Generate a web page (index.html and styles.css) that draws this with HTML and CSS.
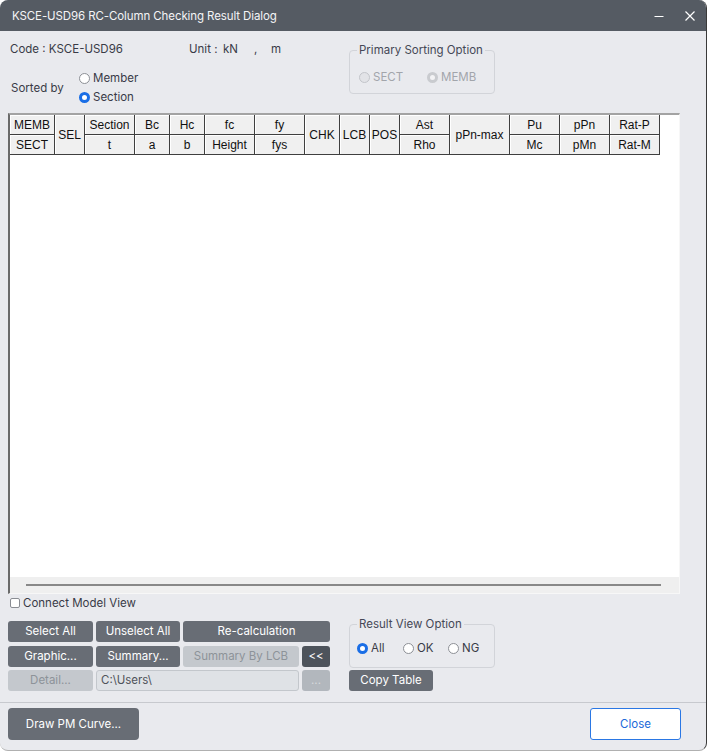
FILE: index.html
```html
<!DOCTYPE html>
<html>
<head>
<meta charset="utf-8">
<link rel="stylesheet" href="styles.css">
</head>
<body>
<div class="window">
  <div class="titlebar">
    <span class="title">KSCE-USD96 RC-Column Checking Result Dialog</span>
    <div class="controls">
      <svg class="ctl" width="10" height="10" viewBox="0 0 10 10"><line x1="0.5" y1="5.5" x2="9.5" y2="5.5" stroke="#fff" stroke-width="1.2"/></svg>
      <svg class="ctl" width="10" height="10" viewBox="0 0 10 10"><path d="M0.5 0.5 L9.5 9.5 M9.5 0.5 L0.5 9.5" stroke="#fff" stroke-width="1.2" fill="none"/></svg>
    </div>
  </div>

  <div class="top">
    <div class="top-left">
      <div class="code-row">
        <span class="c-code">Code : KSCE-USD96</span>
        <span class="c-unit">Unit :</span>
        <span class="c-kn">kN</span>
        <span class="c-comma">,</span>
        <span>m</span>
      </div>
      <div class="sort-row">
        <span class="sort-label">Sorted by</span>
        <div class="radio-col">
          <div class="radio"><span class="dot"></span>Member</div>
          <div class="radio"><span class="dot on"></span>Section</div>
        </div>
      </div>
    </div>
    <fieldset class="group group-primary">
      <legend>Primary Sorting Option</legend>
      <div class="radio-row">
        <div class="radio disabled w-sect"><span class="dot dis"></span>SECT</div>
        <div class="radio disabled"><span class="dot dis-on"></span>MEMB</div>
      </div>
    </fieldset>
  </div>

  <div class="grid-wrap">
    <div class="hdr">
      <div class="hc">MEMB</div>
      <div class="hc span2">SEL</div>
      <div class="hc">Section</div>
      <div class="hc">Bc</div>
      <div class="hc">Hc</div>
      <div class="hc">fc</div>
      <div class="hc">fy</div>
      <div class="hc span2">CHK</div>
      <div class="hc span2">LCB</div>
      <div class="hc span2">POS</div>
      <div class="hc">Ast</div>
      <div class="hc span2">pPn-max</div>
      <div class="hc">Pu</div>
      <div class="hc">pPn</div>
      <div class="hc">Rat-P</div>
      <div class="hc">SECT</div>
      <div class="hc">t</div>
      <div class="hc">a</div>
      <div class="hc">b</div>
      <div class="hc">Height</div>
      <div class="hc">fys</div>
      <div class="hc">Rho</div>
      <div class="hc">Mc</div>
      <div class="hc">pMn</div>
      <div class="hc">Rat-M</div>
    </div>
    <div class="grid-body"></div>
    <div class="hscroll"><div class="thumb"></div></div>
  </div>

  <div class="check-row"><span class="cbox"></span>Connect Model View</div>

  <div class="bottom">
    <div class="btn-grid">
      <button class="btn">Select All</button>
      <button class="btn">Unselect All</button>
      <button class="btn span-wide">Re-calculation</button>
      <button class="btn">Graphic...</button>
      <button class="btn">Summary...</button>
      <button class="btn dis">Summary By LCB</button>
      <button class="btn darker">&lt;&lt;</button>
      <button class="btn dis">Detail...</button>
      <div class="path span-path">C:\Users\</div>
      <button class="btn dis2">...</button>
    </div>
    <div class="right-col">
      <fieldset class="group group-result">
        <legend>Result View Option</legend>
        <div class="radio-row">
          <div class="radio w-all"><span class="dot on"></span>All</div>
          <div class="radio w-ok"><span class="dot"></span>OK</div>
          <div class="radio"><span class="dot"></span>NG</div>
        </div>
      </fieldset>
      <button class="btn copy">Copy Table</button>
    </div>
  </div>

  <div class="sep"></div>

  <div class="footer">
    <button class="btn pm">Draw PM Curve...</button>
    <button class="close">Close</button>
  </div>
</div>
</body>
</html>
```
FILE: styles.css
```css
html, body {
  margin: 0;
  padding: 0;
  background: #ffffff;
}
body {
  font-family: Inter, "Noto Sans", sans-serif;
  font-size: 11.5px;
  color: #393b47;
}
.window {
  width: 706px;
  height: 750px;
  background: #e9eaee;
  border-right: 1px solid #3a3a3a;
  border-bottom: 1px solid #b0b0b0;
  border-radius: 8px;
  overflow: hidden;
  display: flex;
  flex-direction: column;
}
.titlebar {
  height: 31px;
  flex: none;
  background: #555b63;
  display: flex;
  align-items: center;
  justify-content: space-between;
  padding: 0 11px 0 12px;
}
.title {
  color: #f4f4f6;
  font-size: 11.5px;
  letter-spacing: -0.1px;
}
.controls {
  display: flex;
  gap: 21px;
  align-items: center;
}
.ctl { display: block; }

.top {
  height: 82px;
  flex: none;
  display: flex;
}
.top-left {
  width: 339px;
  padding: 10px 0 0 10px;
}
.code-row {
  display: flex;
  height: 16px;
  line-height: 16px;
}
.c-code { width: 179px; }
.c-unit { width: 34px; }
.c-kn { width: 31px; }
.c-comma { width: 17px; }
.sort-row {
  display: flex;
  align-items: center;
  margin-top: 12px;
}
.sort-label {
  width: 68px;
  padding-left: 1px;
}
.radio-col { display: flex; flex-direction: column; }
.radio {
  display: flex;
  align-items: center;
  height: 19px;
  line-height: 19px;
}
.dot {
  width: 11px;
  height: 11px;
  box-sizing: border-box;
  border-radius: 50%;
  border: 1px solid #8d9096;
  background: #fff;
  margin-right: 3px;
  flex: none;
}
.dot.on {
  border: 3px solid #1a6ee6;
  background: #fff;
}
.dot.dis {
  border: 1px solid #c3c5ca;
  background: #e2e3e7;
}
.dot.dis-on {
  border: 3px solid #c9cbcf;
  background: #f3f3f5;
}
.radio.disabled { color: #a2a5ab; }

.group {
  margin: 0;
  border: 1px solid #d2d4d9;
  border-radius: 4px;
  width: 146px;
  box-sizing: border-box;
  padding: 0 0 0 7px;
}
.group legend {
  padding: 0 2px;
  line-height: 14px;
  color: #454856;
}
.group-primary {
  margin-top: 12px;
  height: 51px;
  padding-top: 12px;
}
.group-primary .radio-row { margin-left: 2px; }
.radio-row {
  display: flex;
  height: 16px;
}
.radio-row .radio { height: 16px; line-height: 16px; }
.w-sect { width: 68px; }
.w-all { width: 46px; }
.w-ok { width: 45px; }

.grid-wrap {
  margin-left: 8px;
  width: 672px;
  height: 481px;
  box-sizing: border-box;
  border-top: 2px solid #a3a3a3;
  border-left: 2px solid #6a6a6a;
  border-right: 1px solid #f7f7f7;
  border-bottom: 1px solid #f7f7f7;
  background: #ffffff;
  display: flex;
  flex-direction: column;
  flex: none;
}
.hdr {
  display: grid;
  grid-template-columns: 45px 30px 50px 35px 35px 50px 50px 35px 30px 30px 50px 60px 50px 50px 50px;
  grid-template-rows: 20px 20px;
  width: 650px;
  font-family: "Liberation Sans", Arial, sans-serif;
  font-size: 12px;
  color: #111;
}
.hc {
  background: #f0f0f0;
  box-sizing: border-box;
  border-right: 1px solid #3f3f3f;
  border-bottom: 1px solid #3f3f3f;
  box-shadow: inset 1px 1px 0 #ffffff;
  display: flex;
  align-items: center;
  justify-content: center;
  line-height: 14px;
}
.hc.span2 { grid-row: span 2; }
.grid-body { flex: 1; }
.hscroll {
  height: 16px;
  background: #efefef;
  display: flex;
  align-items: center;
  padding-left: 16px;
}
.thumb {
  width: 635px;
  height: 2px;
  background: #888888;
}

.check-row {
  height: 18px;
  flex: none;
  display: flex;
  align-items: center;
  padding-left: 10px;
}
.cbox {
  width: 10px;
  height: 10px;
  box-sizing: border-box;
  border: 1px solid #8a8d93;
  border-radius: 2px;
  background: #fff;
  margin-right: 3px;
}

.bottom {
  display: flex;
  padding-left: 8px;
  flex: none;
  height: 79px;
}
.btn-grid {
  margin-top: 9px;
  display: grid;
  grid-template-columns: 85px 84px 116px 28px;
  grid-template-rows: 21px 21px 21px;
  column-gap: 3px;
  row-gap: 3.5px;
  height: 70px;
}
.btn {
  font-family: Inter, "Noto Sans", sans-serif;
  font-size: 11.5px;
  color: #ffffff;
  background: #686d75;
  border: none;
  border-radius: 3px;
  padding: 0;
  margin: 0;
  height: 21px;
  line-height: 21px;
}
.btn.span-wide { grid-column: span 2; }
.btn.darker { background: #4d535b; }
.btn.dis { background: #c4c8cd; color: #8d9399; }
.btn.dis2 { background: #b2b7bd; color: #d6d9dc; }
.path {
  box-sizing: border-box;
  background: #dfe2e6;
  border: 1px solid #c3c7cc;
  border-radius: 3px;
  color: #4f535a;
  padding-left: 4px;
  line-height: 19px;
  height: 21px;
}
.path.span-path { grid-column: span 2; }

.right-col {
  margin-left: 19px;
  margin-top: 5px;
  display: flex;
  flex-direction: column;
}
.group-result {
  height: 51px;
  padding-top: 9px;
}
.btn.copy {
  width: 84px;
  margin-top: 2px;
}

.sep {
  height: 1px;
  background: #c7c9ce;
  margin-top: 11px;
  flex: none;
}
.footer {
  display: flex;
  justify-content: space-between;
  padding: 5px 25px 0 8px;
}
.btn.pm {
  width: 131px;
  height: 32px;
  line-height: 32px;
  border-radius: 4px;
}
.close {
  width: 91px;
  height: 32px;
  background: #ffffff;
  border: 1px solid #2a77e4;
  border-radius: 3px;
  color: #2069d9;
  font-family: Inter, "Noto Sans", sans-serif;
  font-size: 11.5px;
  padding: 0;
}
```
